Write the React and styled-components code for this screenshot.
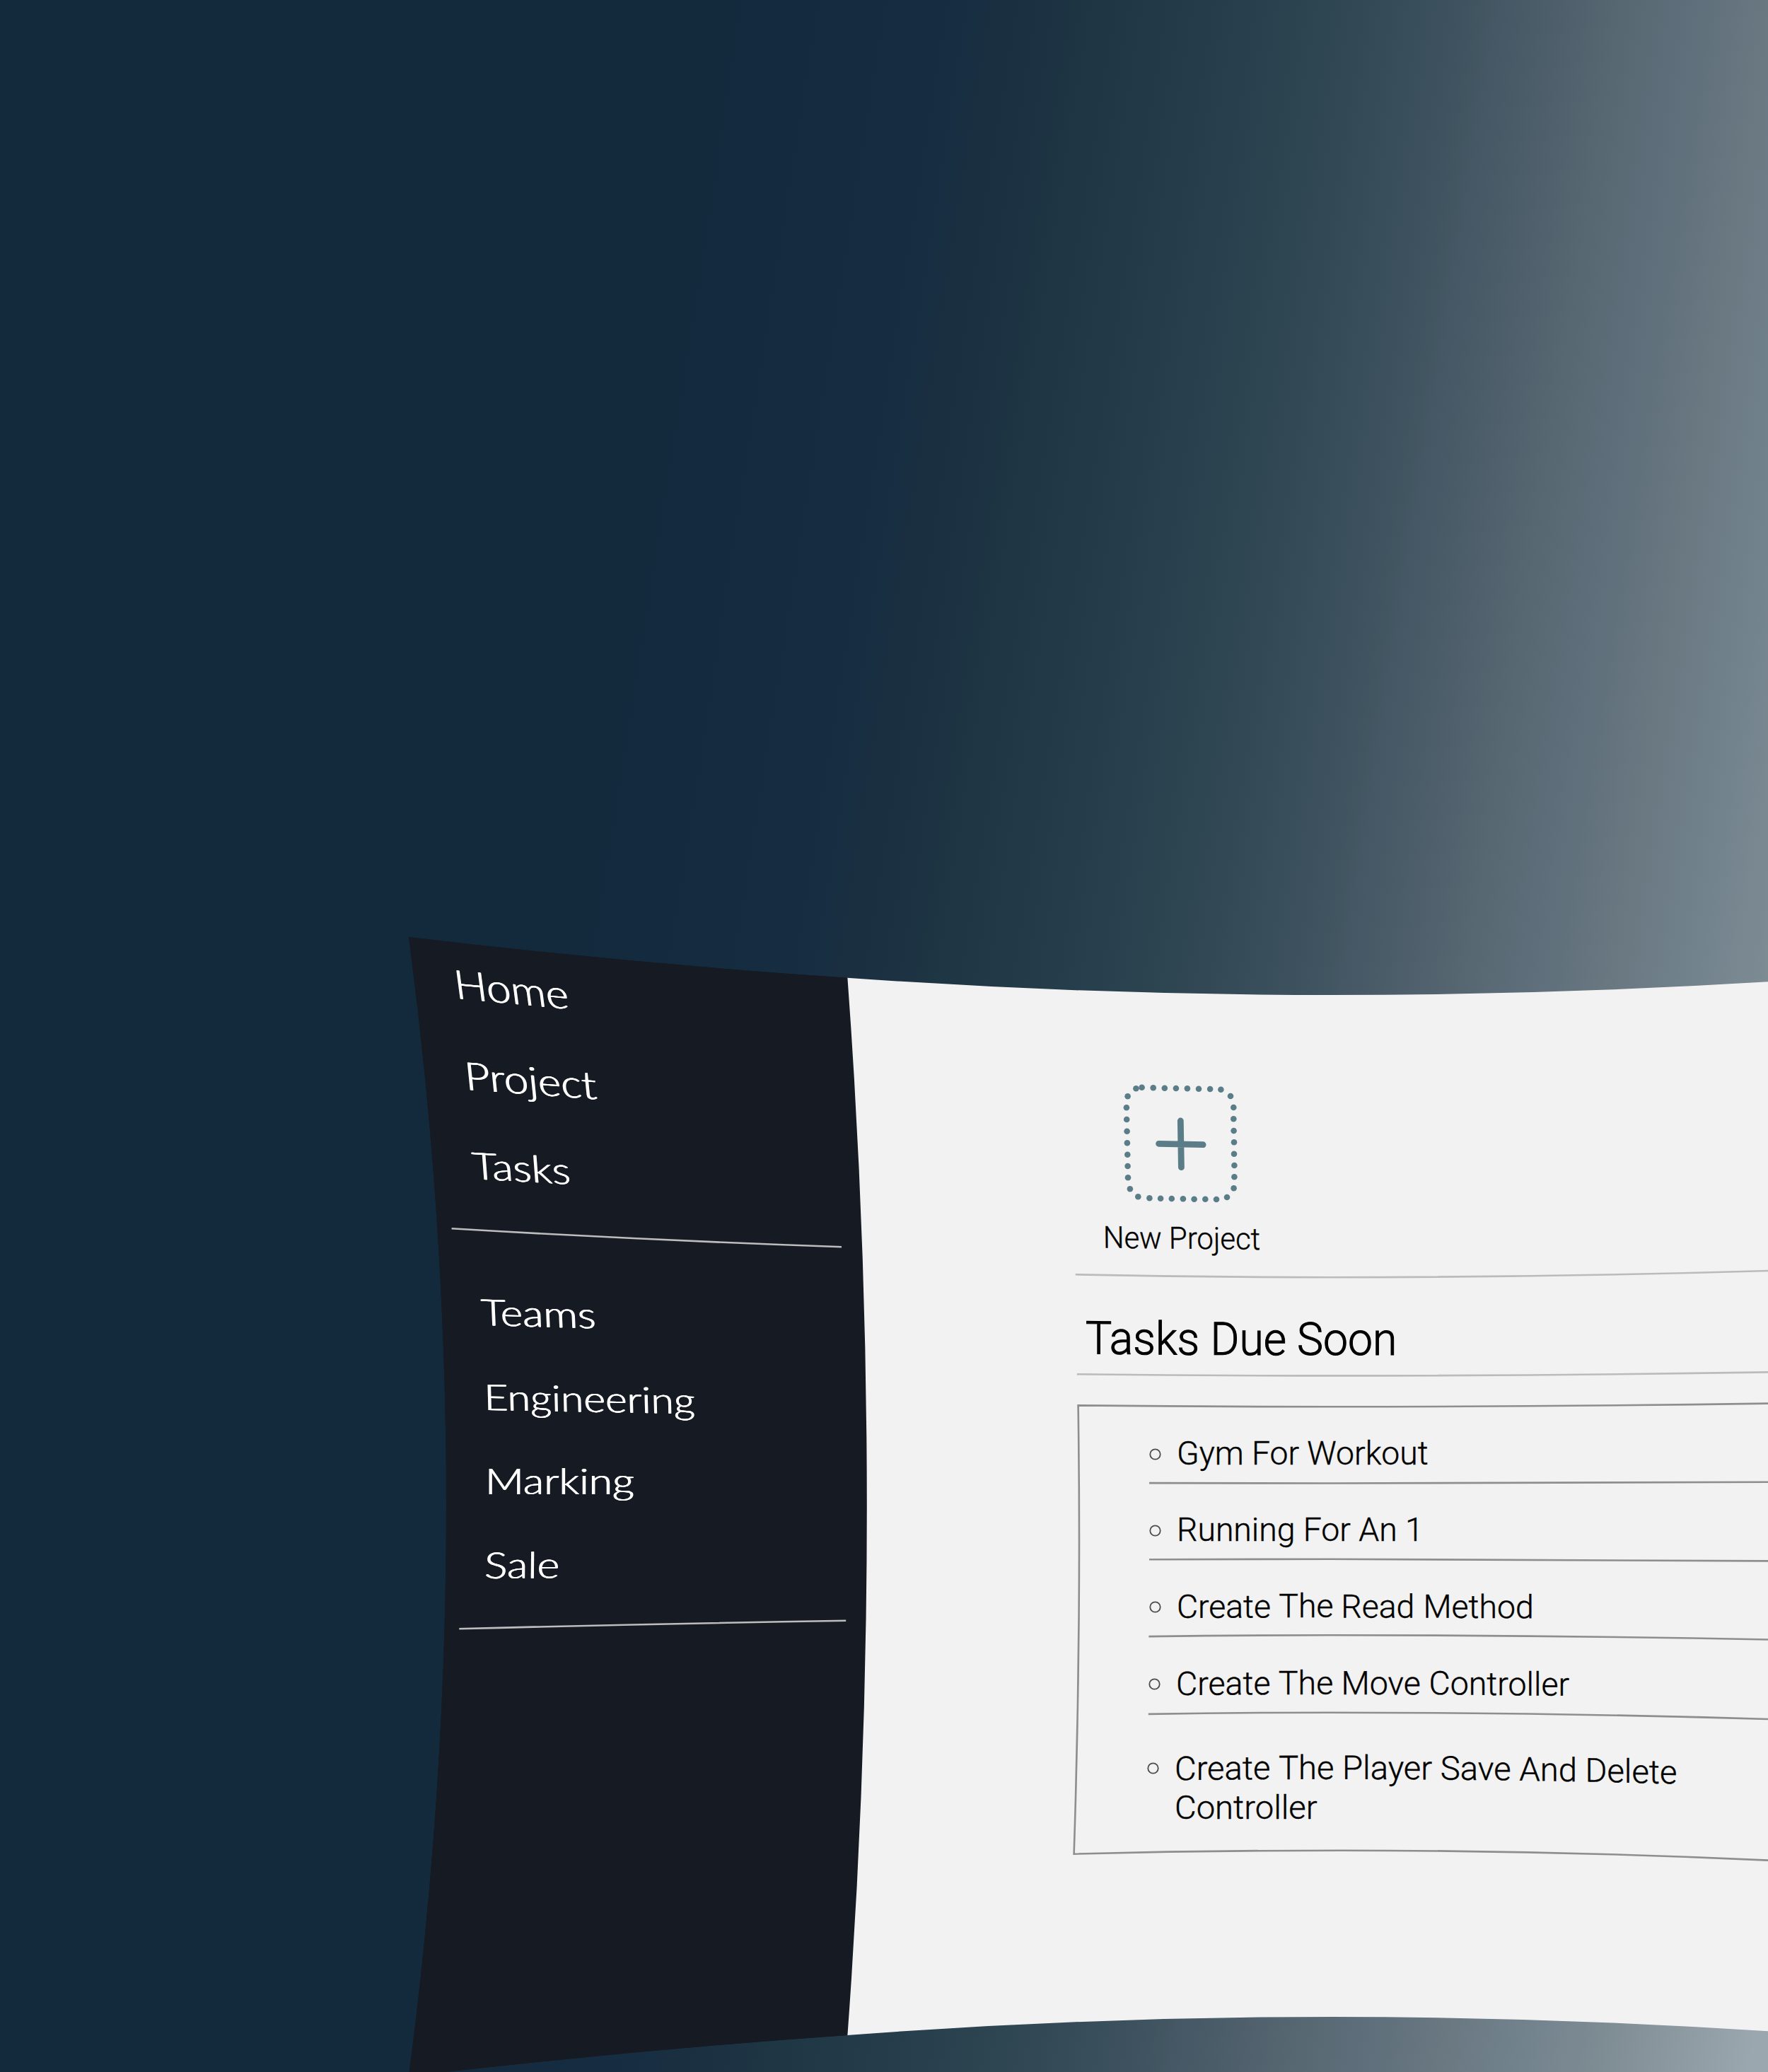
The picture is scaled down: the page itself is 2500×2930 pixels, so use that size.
import React from "react";
import styled, { createGlobalStyle } from "styled-components";

const GlobalStyle = createGlobalStyle`
  body { margin: 0; background: #14293d; }
`;

const Canvas = styled.div`
  box-sizing: border-box;
  width: 2500px;
  height: 2930px;
  padding: 1325px 0 0 578px;
  overflow: hidden;
  background: linear-gradient(
    99deg,
    #13293c 0px, #13293c 945px, #152b3f 1228px, #172d42 1345px, #1a3040 1400px,
    #1c3243 1470px, #1e3543 1520px, #243b4a 1664px, #2c4350 1821px,
    #324855 1900px, #3e535f 2042px, #4a5b68 2136px, #566772 2260px, #5f6f7b 2368px,
    #687780 2460px, #73838d 2587px, #7d8b93 2686px, #9ba7ae 2901px
  );
`;

const Frame = styled.div`
  display: grid;
  grid-template-columns: 648px 1fr;
  height: 1605px;
  background: linear-gradient(90deg, #161b23 620px, #f2f2f2 620px);
  clip-path: path("M0 0 Q310 37 620 57.7 Q963 82 1306 82 Q1614 82 1922 63.3 V1547.3 Q1614 1527 1306 1527 Q963 1527 620 1553 Q310 1574.5 0 1611 Q106 802 0 0 Z");
`;

const Sidebar = styled.nav`
  display: flex;
  flex-direction: column;
  align-items: flex-start;
  background: #161b23;
  clip-path: path("M-5 0 H620.4 V57.7 Q675.2 805 620.4 1553 V1620 H-5 Z");
`;

const NavItem = styled.a`
  flex: none;
  margin: ${(p) => p.$gap}px 0 0 ${(p) => p.$indent}px;
  height: 60px;
  font: 300 48px/60px Lato, "Liberation Sans", sans-serif;
  color: #fff;
  text-shadow: 0.55px 0 0 #fff, -0.55px 0 0 #fff;
  white-space: nowrap;
  transform: matrix(${(p) => p.$warp.join(", ")}, 0, 0);
  transform-origin: 0 48.6px;
`;

const Rule = styled.svg`
  display: block;
  flex: none;
  overflow: visible;
  fill: none;
  stroke-width: 2.6px;
  stroke: ${(p) => p.$tone};
  margin-top: ${(p) => p.$gap}px;
`;

const Content = styled.main`
  display: flex;
  flex-direction: column;
  padding: 205px 0 0 289px;
  font-family: Roboto, "Liberation Sans", sans-serif;
  font-weight: 300;
  color: #000;
`;

const NewProject = styled.div`
  display: flex;
  flex-direction: column;
  gap: 19px;
  padding-left: 44.5px;
`;

const TileIcon = styled.svg`
  display: block;
  margin-left: 25.5px;
  overflow: visible;
  fill: #5a7d87;
`;

const TileLabel = styled.span`
  align-self: flex-start;
  height: 52px;
  font-size: 43px;
  line-height: 52px;
  white-space: nowrap;
  -webkit-text-stroke: 0.4px #000;
  transform: matrix(0.973, 0.01, 0.01, 1, 0, -0.4);
  transform-origin: 0 40.7px;
`;

const Heading = styled.h1`
  align-self: flex-start;
  margin: 46px 0 0 20.2px;
  height: 74.2px;
  font-size: 64.7px;
  line-height: 76px;
  font-weight: 300;
  white-space: nowrap;
  -webkit-text-stroke: 1px #000;
  transform: scaleX(0.965);
  transform-origin: 0 60.1px;
`;

const TaskBox = styled.section`
  position: relative;
  display: flex;
  flex-direction: column;
  height: 650px;
  margin-top: 31px;
`;

const BoxOutline = styled.svg`
  position: absolute;
  inset: 0;
  overflow: visible;
  fill: none;
  stroke: #8e8e8e;
  stroke-width: 2.6px;
`;

const Task = styled.div`
  display: flex;
  flex-direction: column;
  padding-top: ${(p) => p.$gap}px;
`;

const TaskRow = styled.div`
  display: flex;
  align-items: flex-start;
  gap: 22.2px;
  padding-left: ${(p) => 109.8 + p.$shift}px;
`;

const Bullet = styled.svg`
  flex: none;
  margin-top: 20.3px;
  fill: none;
  stroke: #4c4c4c;
  stroke-width: 1.8px;
`;

const TaskText = styled.span`
  font-size: ${(p) => p.$size}px;
  line-height: 56.6px;
  white-space: nowrap;
  -webkit-text-stroke: 0.4px #000;
  transform: scaleX(${(p) => p.$stretch});
  transform-origin: 0 0;
`;

const Word = styled.span`
  display: inline-block;
  transform: matrix(1, ${(p) => p.$slope}, 0, 1, 0, ${(p) => p.$dy});
`;

const dots = [
  [21.4, 9.3], [29.6, 7.7], [45.7, 8.3], [61.8, 8.7], [77.9, 9], [93.9, 9.3], [110, 9.7], [126.1, 10], [141.4, 10.7],
  [155, 20], [159.3, 36], [159.3, 52.3], [159.6, 69], [160, 85.3], [160, 101.7], [160.4, 118], [160.4, 134.3],
  [159.6, 150.3], [150, 163], [135, 166], [119.3, 165.7], [103.6, 165.7], [87.9, 165.3], [71.8, 165], [56.1, 164.7],
  [40.4, 164.3], [24.3, 162.3], [12.9, 151.3], [10, 135.3], [9.6, 119], [9.3, 102.7], [8.9, 86.3], [8.6, 69.7],
  [8.2, 53], [7.9, 36.3], [9.6, 20.3],
];

const mainLinks = [
  { label: "Home", gap: 38.5, indent: 67, warp: [1.28, 0.122, 0.157, 1.183] },
  { label: "Project", gap: 69.4, indent: 80.6, warp: [1.29, 0.096, 0.115, 1.142] },
  { label: "Tasks", gap: 65.7, indent: 90.6, warp: [1.275, 0.074, 0.085, 1.1] },
];

const teamLinks = [
  { label: "Teams", gap: 58.9, indent: 103, warp: [1.256, 0.036, 0.045, 1.075] },
  { label: "Engineering", gap: 59.7, indent: 107.1, warp: [1.224, 0.022, 0.025, 1.065] },
  { label: "Marking", gap: 59.4, indent: 108.2, warp: [1.26, 0, 0, 1.065] },
  { label: "Sale", gap: 59.2, indent: 107.4, warp: [1.26, -0.006, -0.01, 1.07] },
];

const tasks = [
  {
    words: [["Gym For Workout", 0.7, 0]],
    size: 45.5, stretch: 1.017, gap: 47.4, shift: 0,
    rule: "M110 7.1 Q240 7.6 365 7.5 T985 5.8",
  },
  {
    words: [["Running For An 1", 0.6, 0]],
    size: 45.5, stretch: 1.0185, gap: 31.5, shift: 0,
    rule: "M110 7.2 Q240 6.7 365 6.7 Q680 6.7 985 9.4",
  },
  {
    words: [["Create", -0.4, -0.003], ["The", -0.6, 0], ["Read", -0.5, 0.002], ["Method", -0.1, 0.005]],
    size: 45.9, stretch: 1.01, gap: 31.5, shift: 0,
    rule: "M109.4 8.1 Q240 6.3 365 6.3 Q680 6.3 985 12.5",
  },
  {
    words: [["Create", 0.5, -0.007], ["The", 0, 0], ["Move", 0.1, 0.003], ["Controller", 1, 0.01]],
    size: 46.2, stretch: 1.007, gap: 32.3, shift: -0.7,
    rule: "M108.8 8.9 Q240 6.7 365 6.7 Q680 6.7 985 16",
  },
  {
    words: [
      ["Create", 0.5, -0.0095], ["The", -0.2, -0.002], ["Player", 0, 0.0045],
      ["Save", 1, 0.012], ["And", 2.4, 0.018], ["Delete", 4.9, 0.024],
    ],
    second: "Controller",
    size: 46.6, stretch: 1.013, gap: 42.7, shift: -2.8,
  },
];

function NavGroup({ links }) {
  return links.map((l) => (
    <NavItem key={l.label} $gap={l.gap} $indent={l.indent} $warp={l.warp}>
      {l.label}
    </NavItem>
  ));
}

function Words({ items }) {
  return items.map(([text, dy, slope], i) => (
    <React.Fragment key={i}>
      {i > 0 && " "}
      <Word $dy={dy} $slope={slope}>{text}</Word>
    </React.Fragment>
  ));
}

export default function App() {
  return (
    <Canvas>
      <GlobalStyle />
      <Frame>
        <Sidebar>
          <NavGroup links={mainLinks} />
          <Rule $gap={54.4} $tone="#bdbdbd" width="648" height="34">
            <path d="M60.6 4.3 Q335 20.5 612 30.3" />
          </Rule>
          <NavGroup links={teamLinks} />
          <Rule $gap={43.8} $tone="#bdbdbd" width="648" height="20">
            <path d="M71.3 15.2 Q345 8.2 618.2 3.8" />
          </Rule>
        </Sidebar>
        <Content>
          <NewProject>
            <TileIcon width="170" height="175">
              {dots.map(([x, y]) => (
                <circle key={`${x}-${y}`} cx={x} cy={y} r="4.3" />
              ))}
              <path d="M84.3 55 L85.4 120.7 M53.6 87.3 L116.1 88.7" fill="none" stroke="#5a7d87" strokeWidth="8.8" strokeLinecap="round" />
            </TileIcon>
            <TileLabel>New Project</TileLabel>
          </NewProject>
          <Rule $gap={14} $tone="#bbb" width="985" height="20">
            <path d="M5.7 12.3 Q185 16.2 365 16.2 Q680 16.2 985 7" />
          </Rule>
          <Heading>
            <Words items={[["Tasks", -0.9, 0.01], ["Due", 0, 0.003], ["Soon", 0.2, 0]]} />
          </Heading>
          <Rule $gap={4.8} $tone="#bbb" width="985" height="14">
            <path d="M7.9 8.3 Q185 10.4 365 10.4 Q680 10.4 985 5.4" />
          </Rule>
          <TaskBox>
            <BoxOutline width="985" height="650">
              <path d="M985 4.6 Q680 9.3 365 9.3 Q185 9.3 9.6 7.4 Q14.2 324 3.6 641.7 Q192 636.7 381 636.7 Q683 636.7 985 650.6" />
            </BoxOutline>
            {tasks.map((task, i) => (
              <Task key={i} $gap={task.gap}>
                <TaskRow $shift={task.shift}>
                  <Bullet width="17" height="17">
                    <circle cx="8.5" cy="8.5" r="7.2" />
                  </Bullet>
                  <TaskText $size={task.size} $stretch={task.stretch}>
                    <Words items={task.words} />
                    {task.second && (
                      <>
                        <br />
                        {task.second}
                      </>
                    )}
                  </TaskText>
                </TaskRow>
                {task.rule && (
                  <Rule $gap={6} $tone="#8e8e8e" width="985" height="14">
                    <path d={task.rule} />
                  </Rule>
                )}
              </Task>
            ))}
          </TaskBox>
        </Content>
      </Frame>
    </Canvas>
  );
}
